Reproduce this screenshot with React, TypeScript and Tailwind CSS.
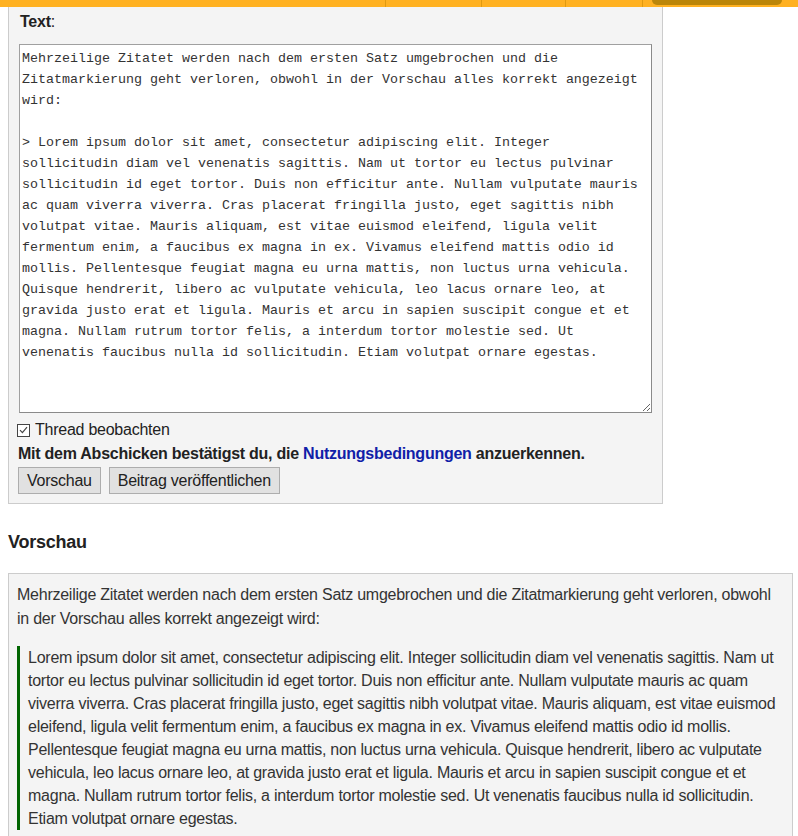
import React from 'react';

const sourceText = `Mehrzeilige Zitatet werden nach dem ersten Satz umgebrochen und die Zitatmarkierung geht verloren, obwohl in der Vorschau alles korrekt angezeigt wird:

> Lorem ipsum dolor sit amet, consectetur adipiscing elit. Integer sollicitudin diam vel venenatis sagittis. Nam ut tortor eu lectus pulvinar sollicitudin id eget tortor. Duis non efficitur ante. Nullam vulputate mauris ac quam viverra viverra. Cras placerat fringilla justo, eget sagittis nibh volutpat vitae. Mauris aliquam, est vitae euismod eleifend, ligula velit fermentum enim, a faucibus ex magna in ex. Vivamus eleifend mattis odio id mollis. Pellentesque feugiat magna eu urna mattis, non luctus urna vehicula. Quisque hendrerit, libero ac vulputate vehicula, leo lacus ornare leo, at gravida justo erat et ligula. Mauris et arcu in sapien suscipit congue et et magna. Nullam rutrum tortor felis, a interdum tortor molestie sed. Ut venenatis faucibus nulla id sollicitudin. Etiam volutpat ornare egestas.`;

const quote =
  'Lorem ipsum dolor sit amet, consectetur adipiscing elit. Integer sollicitudin diam vel venenatis sagittis. Nam ut tortor eu lectus pulvinar sollicitudin id eget tortor. Duis non efficitur ante. Nullam vulputate mauris ac quam viverra viverra. Cras placerat fringilla justo, eget sagittis nibh volutpat vitae. Mauris aliquam, est vitae euismod eleifend, ligula velit fermentum enim, a faucibus ex magna in ex. Vivamus eleifend mattis odio id mollis. Pellentesque feugiat magna eu urna mattis, non luctus urna vehicula. Quisque hendrerit, libero ac vulputate vehicula, leo lacus ornare leo, at gravida justo erat et ligula. Mauris et arcu in sapien suscipit congue et et magna. Nullam rutrum tortor felis, a interdum tortor molestie sed. Ut venenatis faucibus nulla id sollicitudin. Etiam volutpat ornare egestas.';

const TopBar = () => (
  <div className="flex h-[7px] w-full bg-[#ffb121]">
    <div className="w-[386px] border-r border-[#e09a10]" />
    <div className="w-[96px] border-r border-[#e09a10]" />
    <div className="w-[84px] border-r border-[#e09a10]" />
    <div className="w-[77px] border-r border-[#e09a10]" />
    <div className="ml-[9px] h-[5px] w-[130px] rounded-b-[5px] bg-[#bb8609]" />
  </div>
);

const App = () => {
  return (
    <div className="min-h-[836px] bg-white font-['Liberation_Sans',Arial,sans-serif] text-[16px] tracking-[-0.25px] text-[#222]">
      <TopBar />

      <div className="px-2">
        {/* Antwortformular */}
        <div className="w-[655px] border-x border-b border-[#ccc] bg-[#f4f4f4] px-[9px] pt-[5px] pb-[9px]">
          <div className="pl-[2px] leading-[20px]">
            <span className="font-bold">Text</span>:
          </div>
          <textarea
            readOnly
            defaultValue={sourceText}
            className="mt-3 ml-px block h-[369px] w-[633px] border border-t-[#a0a0a0] border-l-[#a0a0a0] border-r-[#8a8a8a] border-b-[#8a8a8a] bg-white px-[2px] pt-[3px] pb-[2px] font-['Liberation_Mono','Courier_New',monospace] text-[13.333px] leading-[21px] tracking-normal text-[#333] outline-none"
          />
          <label className="mt-[5px] flex h-6 items-center gap-[5px]">
            <span className="ml-[-1px] flex h-[13px] w-[13px] items-center justify-center border border-[#444] bg-white">
              <svg width="9" height="8" viewBox="0 0 9 8" fill="none">
                <path d="M1 4.2 L3.4 6.6 L8 1.2" stroke="#444" strokeWidth="1.2" />
              </svg>
            </span>
            <span>Thread beobachten</span>
          </label>
          <p className="h-6 leading-6 font-bold">
            Mit dem Abschicken bestätigst du, die{' '}
            <a className="text-[#1020a8]" href="#">
              Nutzungsbedingungen
            </a>{' '}
            anzuerkennen.
          </p>
          <div className="mt-px flex gap-2">
            <button className="h-[27px] border border-[#adadad] bg-[#e1e1e1] px-2 leading-[25px]">
              Vorschau
            </button>
            <button className="h-[27px] border border-[#adadad] bg-[#e1e1e1] px-2 leading-[25px]">
              Beitrag veröffentlichen
            </button>
          </div>
        </div>

        {/* Vorschau */}
        <h2 className="mt-[26px] text-[18px] leading-6 font-bold">Vorschau</h2>
        <div className="mt-[19px] w-[785px] border border-[#ccc] bg-[#f4f4f4] px-2 pt-[9px] pb-4 leading-6 text-[#333]">
          <p>
            Mehrzeilige Zitatet werden nach dem ersten Satz umgebrochen und die Zitatmarkierung geht verloren, obwohl in der Vorschau alles korrekt angezeigt wird:
          </p>
          <blockquote className="mt-[15px] border-l-[3px] border-[#006400] pl-2 leading-[23px]">{quote}</blockquote>
        </div>
      </div>
    </div>
  );
};

export default App;
